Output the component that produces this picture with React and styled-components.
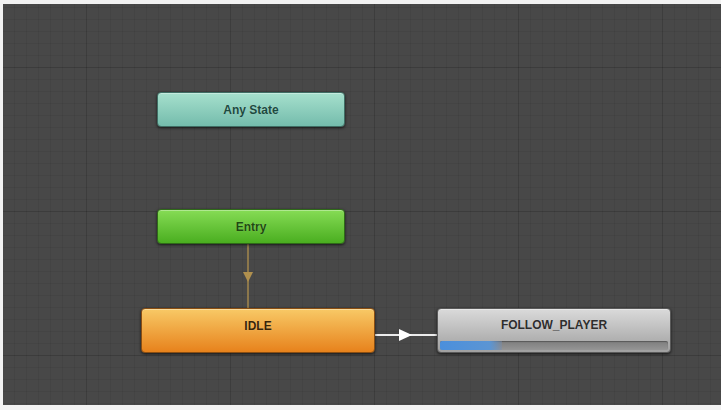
import React from 'react';
import styled, { createGlobalStyle } from 'styled-components';

const GlobalStyle = createGlobalStyle`
  html, body {
    margin: 0;
    padding: 0;
    background: #ffffff;
  }
`;

const Frame = styled.div`
  width: 721px;
  height: 410px;
  padding: 4px 0 5px 3px;
  box-sizing: border-box;
  background: #f2f2f2;
  display: flex;
`;

const Canvas = styled.div`
  position: relative;
  flex: 1;
  overflow: hidden;
  background-color: #484848;
  background-image:
    linear-gradient(90deg, rgba(0, 0, 0, 0.1) 0 1px, transparent 1px),
    linear-gradient(0deg, rgba(0, 0, 0, 0.12) 0 1px, transparent 1px),
    linear-gradient(90deg, rgba(0, 0, 0, 0.06) 0 1px, transparent 1px),
    linear-gradient(0deg, rgba(0, 0, 0, 0.06) 0 1px, transparent 1px);
  background-size: 144px 144px, 144px 144px, 12px 12px, 12px 12px;
  background-position: 83px 0, 0 64px, 11px 0, 0 4px;
`;

const palettes = {
  any: { top: '#a6e0cd', bottom: '#74bcac', text: '#1d4a40', edge: '#3f6e64' },
  entry: { top: '#86dc55', bottom: '#4aae20', text: '#1f4a10', edge: '#2f6a18' },
  idle: { top: '#f8c966', bottom: '#e7821c', text: '#3a2508', edge: '#8a4e12' },
  state: { top: '#dadada', bottom: '#a0a0a0', text: '#2e2e2e', edge: '#5a5a5a' },
};

const Node = styled.div`
  position: absolute;
  left: ${(p) => p.$x}px;
  top: ${(p) => p.$y}px;
  width: ${(p) => p.$w}px;
  height: ${(p) => p.$h}px;
  box-sizing: border-box;
  border-radius: 4px;
  border: 1px solid ${(p) => palettes[p.$kind].edge};
  background: linear-gradient(
    180deg,
    ${(p) => palettes[p.$kind].top},
    ${(p) => palettes[p.$kind].bottom}
  );
  box-shadow: 0 1px 3px rgba(0, 0, 0, 0.7), inset 0 1px 0 rgba(255, 255, 255, 0.35);
  display: flex;
  flex-direction: column;
  overflow: hidden;
`;

const Label = styled.div`
  flex: 1;
  display: flex;
  align-items: center;
  justify-content: center;
  padding-bottom: ${(p) => p.$lift || 0}px;
  font-family: 'Liberation Sans', Arial, sans-serif;
  font-weight: bold;
  font-size: 12px;
  color: ${(p) => palettes[p.$kind].text};
  text-shadow: 0 0 1px rgba(255, 255, 255, 0.3);
`;

const Progress = styled.div`
  height: 9px;
  margin: 0 2px 2px;
  border-radius: 2px;
  background: linear-gradient(180deg, #7d7d7d, #959595);
  box-shadow: inset 0 1px 1px rgba(0, 0, 0, 0.3);
  overflow: hidden;
`;

const ProgressFill = styled.div`
  height: 100%;
  background: linear-gradient(90deg, #4b8fdc 0%, #5b95d4 80%, rgba(120, 140, 170, 0.4) 100%);
`;

const Edges = styled.svg`
  position: absolute;
  left: 0;
  top: 0;
  width: 100%;
  height: 100%;
  pointer-events: none;
`;

export default function App() {
  return (
    <>
      <GlobalStyle />
      <Frame>
        <Canvas>
          <Edges viewBox="0 0 718 401">
            <line x1="245" y1="236" x2="245" y2="304" stroke="#a3874c" strokeWidth="1.5" />
            <polygon points="240,268 250,268 245,278" fill="#b0904e" />
            <line x1="372" y1="331" x2="434" y2="331" stroke="#ececec" strokeWidth="2" />
            <polygon points="396,325 396,337 409,331" fill="#ffffff" />
          </Edges>

          <Node $kind="any" $x={154} $y={88} $w={188} $h={35}>
            <Label $kind="any">Any State</Label>
          </Node>

          <Node $kind="entry" $x={154} $y={205} $w={188} $h={35}>
            <Label $kind="entry">Entry</Label>
          </Node>

          <Node $kind="idle" $x={138} $y={304} $w={234} $h={45}>
            <Label $kind="idle" $lift={10}>IDLE</Label>
          </Node>

          <Node $kind="state" $x={434} $y={304} $w={234} $h={45}>
            <Label $kind="state" $lift={1}>FOLLOW_PLAYER</Label>
            <Progress>
              <ProgressFill style={{ width: '27%' }} />
            </Progress>
          </Node>
        </Canvas>
      </Frame>
    </>
  );
}
